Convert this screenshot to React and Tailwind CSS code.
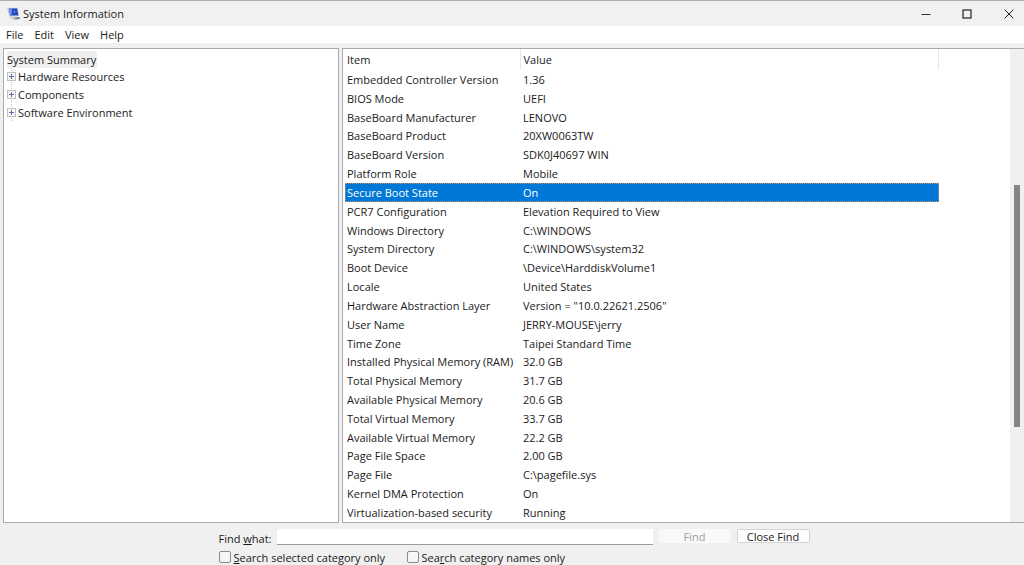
import { useState } from 'react';

const menus = ['File', 'Edit', 'View', 'Help'];

const categories = ['Hardware Resources', 'Components', 'Software Environment'];

const items = [
  ['Embedded Controller Version', '1.36'],
  ['BIOS Mode', 'UEFI'],
  ['BaseBoard Manufacturer', 'LENOVO'],
  ['BaseBoard Product', '20XW0063TW'],
  ['BaseBoard Version', 'SDK0J40697 WIN'],
  ['Platform Role', 'Mobile'],
  ['Secure Boot State', 'On'],
  ['PCR7 Configuration', 'Elevation Required to View'],
  ['Windows Directory', 'C:\\WINDOWS'],
  ['System Directory', 'C:\\WINDOWS\\system32'],
  ['Boot Device', '\\Device\\HarddiskVolume1'],
  ['Locale', 'United States'],
  ['Hardware Abstraction Layer', 'Version = "10.0.22621.2506"'],
  ['User Name', 'JERRY-MOUSE\\jerry'],
  ['Time Zone', 'Taipei Standard Time'],
  ['Installed Physical Memory (RAM)', '32.0 GB'],
  ['Total Physical Memory', '31.7 GB'],
  ['Available Physical Memory', '20.6 GB'],
  ['Total Virtual Memory', '33.7 GB'],
  ['Available Virtual Memory', '22.2 GB'],
  ['Page File Space', '2.00 GB'],
  ['Page File', 'C:\\pagefile.sys'],
  ['Kernel DMA Protection', 'On'],
  ['Virtualization-based security', 'Running'],
];

function AppIcon() {
  return (
    <svg width="14" height="14" viewBox="0 0 14 14" aria-hidden="true">
      <path d="M0.3 1 L10.6 0.8 L12 9 L2.2 9.4 Z" fill="#b4c4e2" />
      <path d="M2 1.6 L10 1.4 L11.3 8.3 L3.2 8.6 Z" fill="#2343b8" />
      <path d="M2 1.6 L5 1.5 L4.6 8.5 L3.2 8.6 Z" fill="#6f97ea" />
      <path d="M6 5 L7.5 2.8 L9 6.5 Z" fill="#5b88ee" />
      <path d="M2 10.6 L8 9.4 L13 10 L12.6 12 L7 13 Z" fill="#c6cad2" />
      <path d="M7.5 10.4 L13 10 L12.6 12 L8.5 12.6 Z" fill="#80858e" />
    </svg>
  );
}

function TitleBar() {
  return (
    <header className="flex h-[26px] shrink-0 items-center justify-between border-t border-[#b0b0b0] bg-[#f1f1f1] pl-[7px]">
      <div className="flex items-center gap-[2px]">
        <AppIcon />
        <h1>System Information</h1>
      </div>
      <div className="flex items-center">
        <button type="button" aria-label="Minimize" className="flex w-[41px] justify-center">
          <svg width="10" height="10" viewBox="0 0 10 10" stroke="#333" fill="none">
            <path d="M0.5 5.5 H9.5" />
          </svg>
        </button>
        <button type="button" aria-label="Maximize" className="flex w-[41px] justify-center">
          <svg width="10" height="10" viewBox="0 0 10 10" stroke="#222" fill="none">
            <rect x="1" y="1" width="8" height="8" strokeWidth="1.2" />
          </svg>
        </button>
        <button type="button" aria-label="Close" className="flex w-[37px] justify-end pr-[10px]">
          <svg width="10" height="10" viewBox="0 0 10 10" stroke="#222" fill="none">
            <path d="M0.7 0.7 L9.3 9.3 M9.3 0.7 L0.7 9.3" />
          </svg>
        </button>
      </div>
    </header>
  );
}

function ExpandIcon() {
  return (
    <svg width="9" height="18" viewBox="0 0 9 18" aria-hidden="true">
      <path d="M4.5 0 V18" stroke="#c4c4c4" strokeDasharray="1 1" />
      <rect x="0.5" y="4.5" width="8" height="8" fill="#f6f6f6" stroke="#c0c0c0" />
      <path d="M2 8.5 H7 M4.5 6 V11" stroke="#5a70b0" />
    </svg>
  );
}

function CategoryTree() {
  return (
    <nav className="w-[336px] max-w-[33%] shrink-0 border border-[#a9abb0] bg-white px-[3px] pt-[2px]">
      <button type="button" className="h-[17px] bg-[#efefef] pr-px">
        System Summary
      </button>
      <ul>
        {categories.map((name) => (
          <li key={name}>
            <button type="button" className="flex h-[18px] items-center gap-[2px]">
              <ExpandIcon />
              {name}
            </button>
          </li>
        ))}
      </ul>
    </nav>
  );
}

function ItemList() {
  const [selected, setSelected] = useState('Secure Boot State');

  return (
    <section className="flex min-w-0 flex-1 border border-r-0 border-[#a9abb0] bg-white">
      <div className="min-w-0 flex-1 overflow-hidden pl-[2px]">
        <table className="h-full w-[594px] table-fixed border-collapse text-left">
          <thead>
            <tr className="h-[21px]">
              <th className="w-[175px] border-r border-[#e6e6e6] px-[2px] pt-px pb-0 font-normal">Item</th>
              <th className="border-r border-[#e6e6e6] px-[3px] pt-px pb-0 font-normal">Value</th>
            </tr>
          </thead>
          <tbody>
            {items.map(([item, value]) => (
              <tr
                key={item}
                onClick={() => setSelected(item)}
                className={
                  item === selected
                    ? 'bg-[#0078d7] text-white outline-1 -outline-offset-1 outline-dotted outline-[#d09060]'
                    : ''
                }
              >
                <td className="px-[2px] pt-px pb-0 whitespace-nowrap">{item}</td>
                <td className="px-[3px] pt-px pb-0 whitespace-nowrap">{value}</td>
              </tr>
            ))}
          </tbody>
        </table>
      </div>
      <div className="flex w-[14px] shrink-0 flex-col items-center bg-[#f0f0f0]">
        <div className="grow-[136]" />
        <div className="w-[6px] grow-[242] bg-[#858585]" />
        <div className="grow-[95]" />
      </div>
    </section>
  );
}

function FindBar() {
  return (
    <form
      className="flex shrink-0 justify-center pt-[6px] pl-1"
      onSubmit={(e) => e.preventDefault()}
    >
      <div>
        <div className="flex h-[18px] items-start">
          <label htmlFor="find" className="w-[58px] pt-[2px]">
            Find <span className="underline">w</span>hat:
          </label>
          <input
            id="find"
            type="text"
            className="h-4 w-[376px] border-b border-[#9a9a9a] bg-white px-1 outline-none"
          />
          <button
            type="submit"
            disabled
            className="ml-[6px] h-[14px] w-[72px] rounded-xs bg-[#f9f9f9] leading-4 text-[#a0a0a0]"
          >
            Find
          </button>
          <button
            type="button"
            className="ml-[6px] h-[14px] w-[73px] rounded-xs border border-[#d4d4d4] bg-[#fdfdfd] leading-[14px]"
          >
            Close Find
          </button>
        </div>
        <div className="flex h-[18px] items-center pt-[2px]">
          <label className="flex w-[188px] items-center gap-[3px]">
            <input
              type="checkbox"
              className="size-3 appearance-none rounded-xs border border-[#8a8a8a] bg-[#f6f6f6] checked:bg-[#0078d7]"
            />
            <span className="pt-[2px]">
              <span className="underline">S</span>earch selected category only
            </span>
          </label>
          <label className="flex items-center gap-[3px]">
            <input
              type="checkbox"
              className="size-3 appearance-none rounded-xs border border-[#8a8a8a] bg-[#f6f6f6] checked:bg-[#0078d7]"
            />
            <span className="pt-[2px]">
              Sea<span className="underline">r</span>ch category names only
            </span>
          </label>
        </div>
      </div>
    </form>
  );
}

export default function App() {
  return (
    <div className="flex h-screen flex-col overflow-hidden bg-[#f0f0f0] font-['Open_Sans','Noto_Sans',sans-serif] text-[11px] leading-4 text-[#1a1a1a]">
      <TitleBar />
      <div className="flex h-[17px] shrink-0 items-center gap-[11px] bg-white px-[6px] pt-px" role="menubar">
        {menus.map((menu) => (
          <button key={menu} type="button" role="menuitem">
            {menu}
          </button>
        ))}
      </div>
      <main className="flex min-h-0 flex-1 gap-[3px] pt-[5px] pl-[3px]">
        <CategoryTree />
        <ItemList />
      </main>
      <FindBar />
    </div>
  );
}
